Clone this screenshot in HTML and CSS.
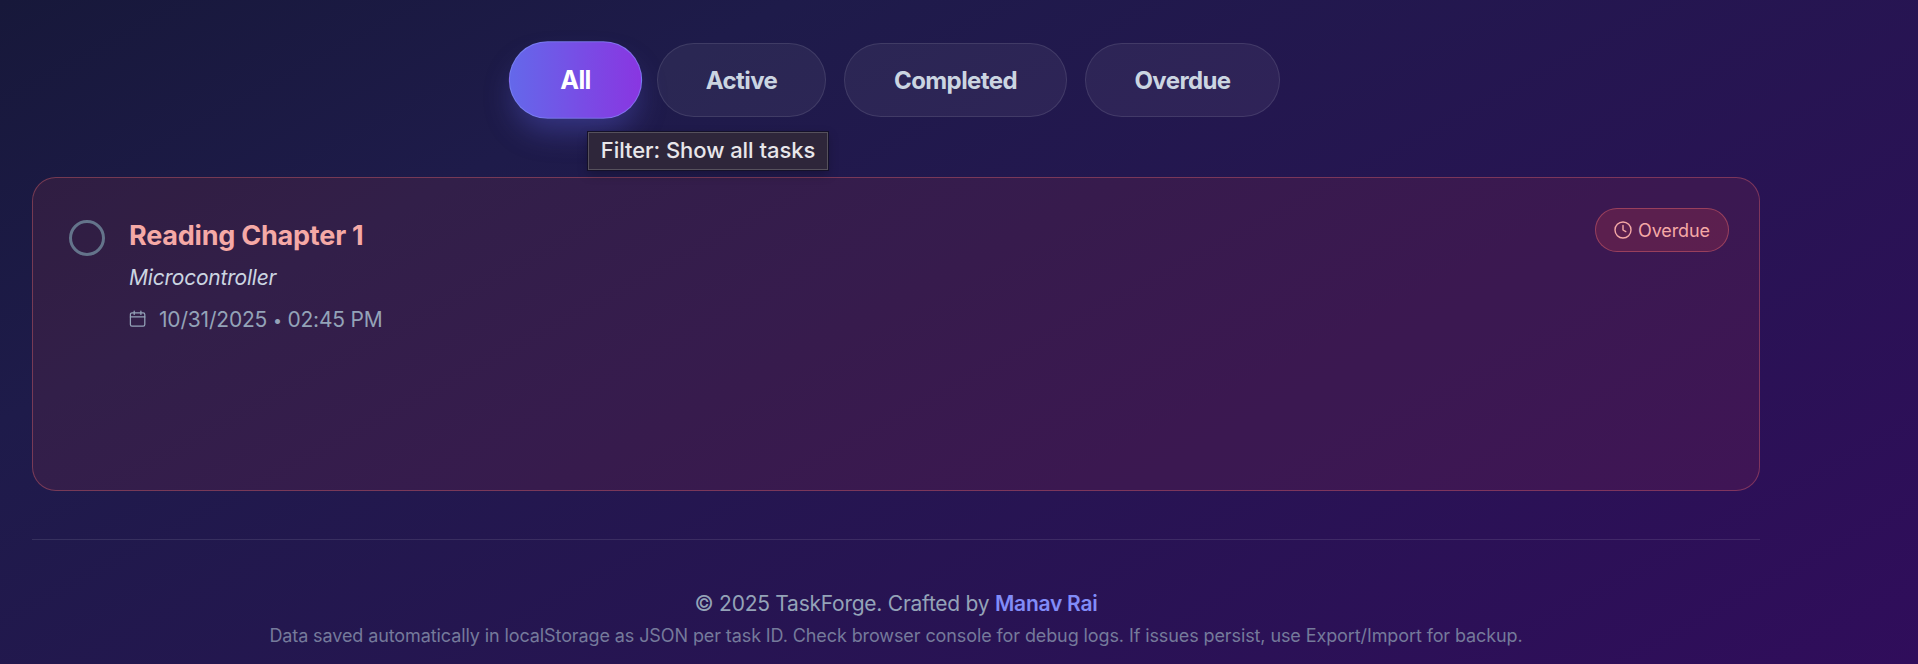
FILE: index.html
```html
<!DOCTYPE html>
<html lang="en">
<head>
<meta charset="utf-8">
<title>TaskForge</title>
<link rel="stylesheet" href="styles.css">
</head>
<body>
<main class="page">
  <nav class="filters">
    <button class="filter filter-active">All</button>
    <button class="filter">Active</button>
    <button class="filter filter-wide">Completed</button>
    <button class="filter filter-last">Overdue</button>
    <div class="tooltip">Filter: Show all tasks</div>
  </nav>
  <article class="task">
    <span class="check"></span>
    <div class="info">
      <h3 class="title">Reading Chapter 1</h3>
      <p class="subject">Microcontroller</p>
      <p class="due">
        <svg class="cal" viewBox="0 0 18 18" fill="none" stroke="currentColor" stroke-width="1.25" stroke-linecap="round" stroke-linejoin="round"><rect x="1.4" y="2.8" width="14.4" height="13.4" rx="1.6"/><path d="M1.4 6.9h14.4M5.2 1v3.4M11.9 1v3.4"/></svg>
        <span class="date">10/31/2025 <span class="dot">•</span> 02:45 PM</span>
      </p>
    </div>
    <span class="badge">
      <svg class="clock" viewBox="0 0 18 18" fill="none" stroke="currentColor" stroke-width="1.4" stroke-linecap="round" stroke-linejoin="round"><circle cx="9" cy="9" r="8"/><path d="M9 4.5V9l2.8 1.6"/></svg>
      <span class="badge-text">Overdue</span>
    </span>
  </article>
  <footer class="footer">
    <p class="credit">© 2025 TaskForge. Crafted by <span class="author">Manav Rai</span></p>
    <p class="note">Data saved automatically in localStorage as JSON per task ID. Check browser console for debug logs. If issues persist, use Export/Import for backup.</p>
  </footer>
</main>
</body>
</html>
```
FILE: styles.css
```css
* { box-sizing: border-box; margin: 0; padding: 0; }
html { height: 100%; }
body {
  height: 664px;
  overflow: hidden;
  font-family: Inter, "Liberation Sans", sans-serif;
  color: #cbd5e1;
  background: linear-gradient(151.9deg, #17183a, #1e1b4a 25%, #300d5b) no-repeat;
}
.page { width: 1728px; margin-left: 32px; padding-top: 43px; }
.filters { position: relative; display: flex; justify-content: center; gap: 18px; height: 134px; }
.filter {
  width: 169px; height: 74px;
  padding-top: 2px;
  border: 1px solid rgba(255,255,255,.1);
  border-radius: 37px;
  background: rgba(255,255,255,.055);
  color: #cbd5e1;
  font: 700 24px/36px Inter, "Liberation Sans", sans-serif;
  letter-spacing: -.6px;
}
.filter-active {
  width: 127px;
  color: #fff;
  border-color: rgba(129,140,248,.65);
  background: linear-gradient(to right, #6468ea, #8936e1);
  box-shadow: 0 16px 28px -5px rgba(99,102,241,.35);
  transform: scale(1.05);
}
.filter-wide { width: 223px; }
.filter-last { width: 195px; }
.tooltip {
  position: absolute; left: 556px; top: 89px;
  width: 240px; height: 38px;
  border: 1px solid #56515c;
  outline: 1px solid #151129;
  background: #2e263a;
  color: #e8e6ea;
  font-size: 22px; line-height: 35px; text-align: center; white-space: nowrap;
  font-weight: 500;
  letter-spacing: -.05px;
  box-shadow: 0 4px 10px rgba(0,0,0,.25);
}
.task {
  display: flex; align-items: flex-start;
  height: 314px;
  padding: 30px 30px 0 36px;
  border: 1px solid rgba(248,113,113,.35);
  border-radius: 24px;
  background: rgba(239,68,68,.1);
}
.check { width: 36px; height: 36px; margin-top: 12px; border: 3px solid #64748b; border-radius: 50%; }
.info { margin-left: 24px; flex: 1; }
.title { margin-top: 10px; font-size: 27px; line-height: 36px; font-weight: 700; color: #f5a9a6; letter-spacing: -.22px; }
.subject { margin-top: 9px; font-size: 21px; line-height: 30px; font-style: italic; color: #cbd5e1; letter-spacing: -.22px; }
.due { display: flex; align-items: center; gap: 12px; margin-top: 12px; font-size: 21px; line-height: 30px; color: #94a3b8; letter-spacing: -.19px; }
.dot { font-size: 16px; vertical-align: 1px; line-height: 1; }
.cal { width: 18px; height: 18px; margin-bottom: 2px; }
.badge {
  display: flex; align-items: center; gap: 6px;
  width: 134px; height: 44px; padding-left: 18px;
  border: 1px solid rgba(248,113,113,.4);
  border-radius: 22px;
  background: rgba(239,68,68,.18);
  color: #f5a9a6; font-size: 18px;
  letter-spacing: -.1px;
}
.clock { width: 18px; height: 18px; }
.footer { margin-top: 48px; padding-top: 49px; border-top: 1px solid rgba(255,255,255,.1); text-align: center; }
.credit { font-size: 21px; line-height: 30px; color: #94a3b8; letter-spacing: -.25px; }
.author { font-weight: 600; color: #818cf8; }
.note { margin-top: 3px; font-size: 18px; line-height: 27px; color: #757a9b; white-space: nowrap; letter-spacing: -.1px; }
```
